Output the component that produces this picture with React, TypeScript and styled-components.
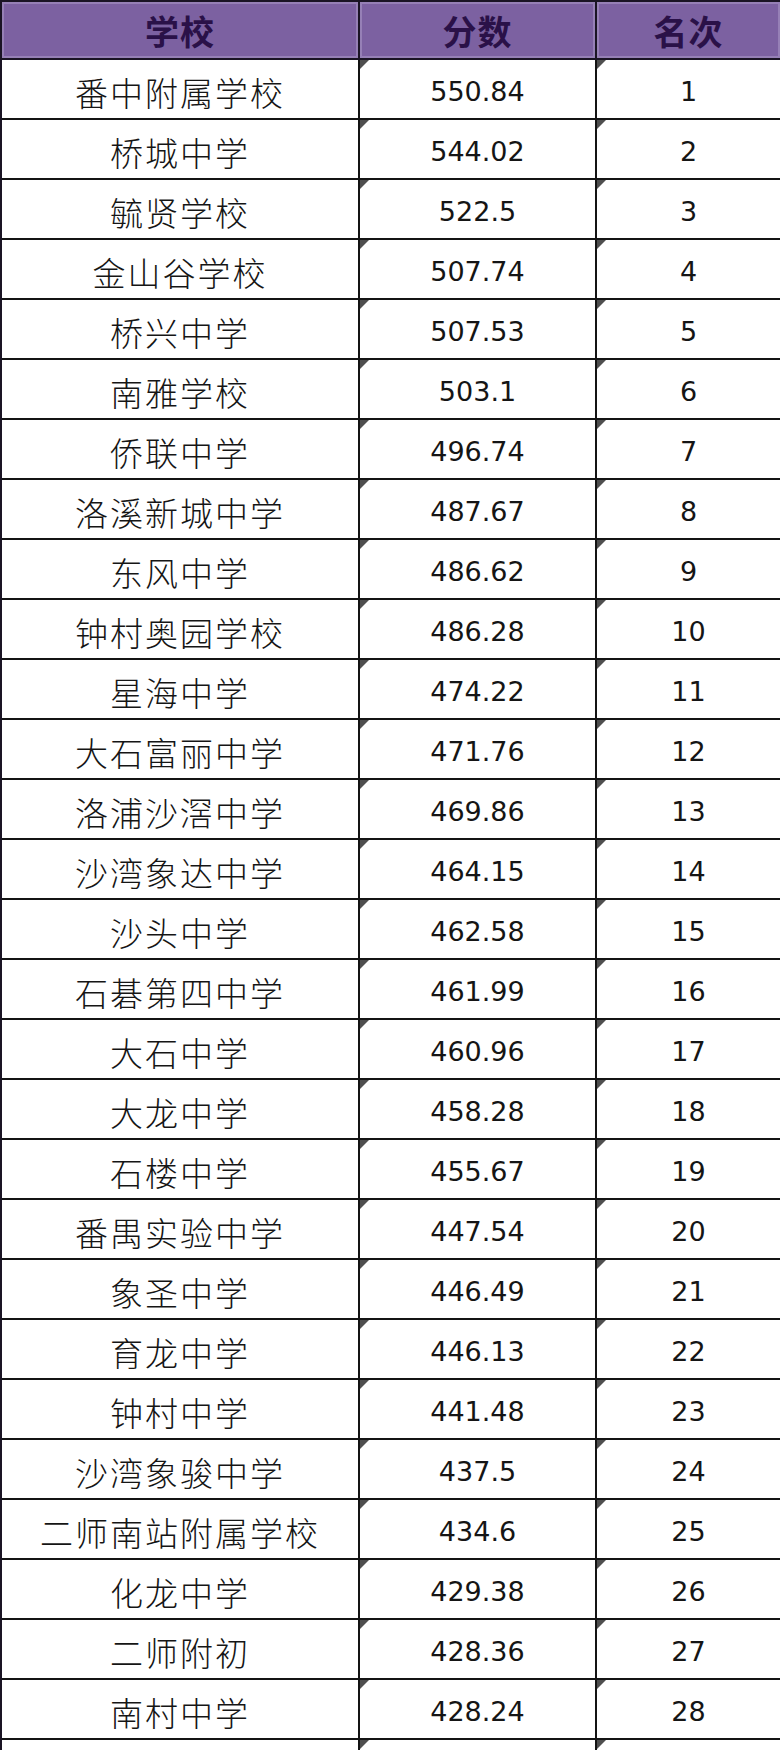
import React from "react";
import styled, { createGlobalStyle } from "styled-components";

const GlobalStyle = createGlobalStyle`
  html, body { margin: 0; padding: 0; background: #ffffff; }
  body { width: 780px; height: 1750px; overflow: hidden; }
`;

const rows: [string, string, number][] = [
  ["番中附属学校", "550.84", 1],
  ["桥城中学", "544.02", 2],
  ["毓贤学校", "522.5", 3],
  ["金山谷学校", "507.74", 4],
  ["桥兴中学", "507.53", 5],
  ["南雅学校", "503.1", 6],
  ["侨联中学", "496.74", 7],
  ["洛溪新城中学", "487.67", 8],
  ["东风中学", "486.62", 9],
  ["钟村奥园学校", "486.28", 10],
  ["星海中学", "474.22", 11],
  ["大石富丽中学", "471.76", 12],
  ["洛浦沙滘中学", "469.86", 13],
  ["沙湾象达中学", "464.15", 14],
  ["沙头中学", "462.58", 15],
  ["石碁第四中学", "461.99", 16],
  ["大石中学", "460.96", 17],
  ["大龙中学", "458.28", 18],
  ["石楼中学", "455.67", 19],
  ["番禺实验中学", "447.54", 20],
  ["象圣中学", "446.49", 21],
  ["育龙中学", "446.13", 22],
  ["钟村中学", "441.48", 23],
  ["沙湾象骏中学", "437.5", 24],
  ["二师南站附属学校", "434.6", 25],
  ["化龙中学", "429.38", 26],
  ["二师附初", "428.36", 27],
  ["南村中学", "428.24", 28],
];

const Table = styled.div`
  display: grid;
  grid-template-columns: 358px 237px 185px;
  width: 780px;
  box-sizing: border-box;
  border-top: 2px solid #1a1424;
  border-left: 2px solid #1a1424;
`;

const HeadCell = styled.div`
  height: 58px;
  box-sizing: border-box;
  border-right: 2px solid #1a1424;
  border-bottom: 2px solid #1a1424;
  background: #7c61a1;
  box-shadow: inset 0 0 0 2px rgba(200, 185, 220, 0.35);
  display: flex;
  align-items: center;
  justify-content: center;
  font-family: "Noto Sans CJK SC", sans-serif;
  font-weight: 700;
  font-size: 34px;
  color: #2a1148;
  letter-spacing: 1px;
`;

const Cell = styled.div<{ $kind: "name" | "num" }>`
  position: relative;
  height: 60px;
  box-sizing: border-box;
  border-right: 2px solid #141414;
  border-bottom: 2px solid #141414;
  background: #ffffff;
  display: flex;
  align-items: center;
  justify-content: center;
  padding-top: ${(p) => (p.$kind === "name" ? "6px" : "4px")};
  color: #151515;
  font-family: ${(p) =>
    p.$kind === "name"
      ? `"Noto Sans CJK SC", sans-serif`
      : `"DejaVu Sans", sans-serif`};
  font-weight: ${(p) => (p.$kind === "name" ? 300 : 400)};
  font-size: ${(p) => (p.$kind === "name" ? "33px" : "27px")};
  letter-spacing: ${(p) => (p.$kind === "name" ? "2px" : "0")};
  ${(p) =>
    p.$kind === "num" &&
    `
    &::before {
      content: "";
      position: absolute;
      left: 0;
      top: 0;
      width: 0;
      height: 0;
      border-top: 9px solid #4f4f4f;
      border-right: 9px solid transparent;
    }
  `}
`;

export default function App() {
  return (
    <>
      <GlobalStyle />
      <Table>
        <HeadCell>学校</HeadCell>
        <HeadCell>分数</HeadCell>
        <HeadCell>名次</HeadCell>
        {rows.map(([name, score, rank]) => (
          <React.Fragment key={rank}>
            <Cell $kind="name">{name}</Cell>
            <Cell $kind="num">{score}</Cell>
            <Cell $kind="num">{rank}</Cell>
          </React.Fragment>
        ))}
        <Cell $kind="name"></Cell>
        <Cell $kind="num"></Cell>
        <Cell $kind="num"></Cell>
      </Table>
    </>
  );
}
